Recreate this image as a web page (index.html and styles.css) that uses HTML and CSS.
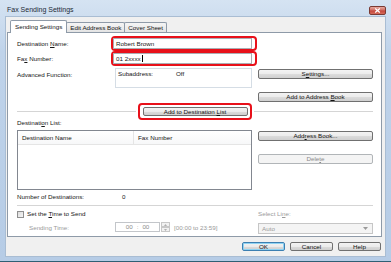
FILE: index.html
```html
<!doctype html>
<html lang="en">
	<head>
		<meta charset="UTF-8" />
		<meta name="viewport" content="width=device-width, initial-scale=1.0" />
		<title>Fax Sending Settings</title>
		<link rel="stylesheet" href="styles.css">
	</head>
	<body>
		<div class="window">
			<div class="titlebar">
				<span class="title">Fax Sending Settings</span>
				<span class="close-btn">
					<svg width="7" height="5" viewBox="0 0 7 5"><path d="M1.2 0.6 L5.8 4.4 M5.8 0.6 L1.2 4.4" stroke="#fff" stroke-width="1.3" fill="none"/></svg>
				</span>
			</div>

			<div class="client">
				<div class="tabs">
					<div class="tab active">Sending Settings</div>
					<div class="tab">Edit Address Book</div>
					<div class="tab">Cover Sheet</div>
				</div>

				<div class="panel">
					<!-- 宛先 -->
					<div class="field-row">
						<span class="label">Destination <u>N</u>ame:</span>
						<div class="highlight field-highlight">
							<div class="textbox">Robert Brown</div>
						</div>
					</div>
					<div class="field-row">
						<span class="label">Fa<u>x</u> Number:</span>
						<div class="highlight field-highlight">
							<div class="textbox">01 2xxxx<span class="caret"></span></div>
						</div>
					</div>

					<div class="split advanced-row">
						<div class="advanced">
							<span class="label wide">Advanced Function:</span>
							<div class="info-box">
								<span class="info-key">Subaddress:</span>
								<span>Off</span>
							</div>
						</div>
						<div>
							<div class="btn settings-btn">S<u>e</u>ttings...</div>
						</div>
					</div>

					<div class="btn side-btn address-add-btn">Add to Address <u>B</u>ook</div>

					<div class="separator-row">
						<div class="line"></div>
						<div class="highlight add-highlight">
							<div class="btn add-btn">Add to Destination <u>L</u>ist</div>
						</div>
						<div class="line"></div>
					</div>

					<div class="caption">Destinati<u>o</u>n List:</div>

					<div class="split list-row">
						<div class="listbox">
							<div class="list-header">
								<span class="col-name">Destination Name</span>
								<span class="col-fax">Fax Number</span>
							</div>
						</div>
						<div>
							<div class="btn book-btn">Add<u>r</u>ess Book...</div>
							<div class="btn disabled delete-btn">Dele<u>t</u>e</div>
						</div>
					</div>

					<div class="count-row">
						<span class="count-label">Number of Destinations:</span>
						<span>0</span>
					</div>

					<div class="hr"></div>

					<div class="split check-row">
						<div class="check-wrap">
							<span class="checkbox"></span>
							<span>Set the <u>T</u>ime to Send</span>
						</div>
						<div class="muted">Select Li<u>n</u>e:</div>
					</div>

					<div class="split time-row">
						<div class="time-wrap">
							<span class="label wide muted indent">Sending Time:</span>
							<div class="time-box"><span>00</span><span>:</span><span>00</span></div>
							<div class="spinner">
								<span class="spin-btn"><svg width="3" height="2" viewBox="0 0 3 2"><path d="M0 2 L3 2 L1.5 0 Z" fill="#b0b0b0"/></svg></span>
								<span class="spin-btn"><svg width="3" height="2" viewBox="0 0 3 2"><path d="M0 0 L3 0 L1.5 2 Z" fill="#b0b0b0"/></svg></span>
							</div>
							<span class="muted range">[00:00 to 23:59]</span>
						</div>
						<div class="select disabled-select">
							<span>Auto</span>
							<svg width="5" height="3" viewBox="0 0 5 3"><path d="M0 0 L5 0 L2.5 3 Z" fill="#9a9a9a"/></svg>
						</div>
					</div>
				</div>

				<div class="footer">
					<div class="btn default footer-btn">OK</div>
					<div class="btn footer-btn">Cancel</div>
					<div class="btn footer-btn">Help</div>
				</div>
			</div>
		</div>
	</body>
</html>
```

FILE: styles.css
```css
* {
	box-sizing: border-box;
}
body {
	margin: 0;
	font-family: "Liberation Sans", Arial, sans-serif;
	font-size: 6.25px;
	color: #151515;
	background: #fff;
}
u {
	text-decoration-thickness: 0.5px;
	text-underline-offset: 1px;
}
.window {
	width: 391px;
	height: 262px;
	display: flex;
	flex-direction: column;
	padding: 0 5px 4px 5px;
	background: linear-gradient(#d5e3f2, #bfd3ea 20%, #b6cce6);
	border-bottom: 1px solid #2f5f74;
}
.titlebar {
	height: 16px;
	display: flex;
	justify-content: space-between;
	padding-left: 2px;
}
.title {
	font-size: 7px;
	padding-top: 6px;
	color: #1d2a36;
}
.close-btn {
	align-self: flex-end;
	width: 17px;
	height: 9px;
	margin: 0 0 1px 0;
	display: flex;
	align-items: center;
	justify-content: center;
	border: 1px solid #7a3a33;
	border-radius: 2px;
	background: linear-gradient(#e8aaa0, #d06f64 45%, #c4473c 55%, #d66b5a);
}

/* クライアント領域 */
.client {
	flex: 1;
	background: #f0f0f0;
	border: 1px solid #a9bdd3;
	display: flex;
	flex-direction: column;
	padding-left: 1px;
}
.tabs {
	height: 15px;
	padding: 3px 0 0 3px;
	display: flex;
	align-items: flex-end;
}
.tab {
	height: 10px;
	padding: 0 3px;
	line-height: 9px;
	border: 1px solid #8e9aa8;
	border-bottom: none;
	border-radius: 2px 2px 0 0;
	background: linear-gradient(#f5f5f5, #e4e4e4);
	margin-right: -1px;
}
.tab.active {
	height: 13px;
	line-height: 11px;
	margin-bottom: -1px;
	background: #fff;
	position: relative;
	z-index: 1;
	padding: 0 4px;
}
.panel {
	width: 375px;
	height: 205px;
	background: #fff;
	border: 1px solid #8e9aa8;
	padding: 3px 8px 0 9px;
}

/* 共通 */
.split {
	display: grid;
	grid-template-columns: 235px 115px;
	column-gap: 6px;
}
.label {
	width: 94px;
	flex-shrink: 0;
}
.label.wide {
	width: 98px;
}
.highlight {
	border: 2px solid #e8101a;
	border-radius: 4px;
}
.btn {
	height: 10px;
	line-height: 8px;
	text-align: center;
	border: 1px solid #707070;
	border-radius: 2px;
	background: linear-gradient(#f3f3f3, #ebebeb 50%, #dcdcdc 51%, #cfcfcf);
	color: #111;
}
.btn.disabled {
	border-color: #b1b5b8;
	background: #f4f4f4;
	color: #8a8a8a;
}
.btn.default {
	border-color: #3c7fb1;
	box-shadow: inset 0 0 0 1px #8fd3f2;
}
.muted {
	color: #9a9a9a;
}

/* 宛先・FAX番号 */
.field-row {
	height: 15px;
	display: flex;
	align-items: center;
}
.field-highlight {
	width: 146px;
	height: 15px;
	display: flex;
	align-items: center;
}
.textbox {
	width: 139px;
	height: 11px;
	border: 1px solid #abadb3;
	background: #fff;
	line-height: 9px;
	padding-left: 2px;
	display: flex;
	align-items: center;
}
.caret {
	width: 1px;
	height: 7px;
	background: #000;
	margin-left: 1px;
}

/* 詳細機能 */
.advanced-row {
	margin-top: 2px;
}
.advanced {
	display: flex;
}
.advanced .label {
	padding-top: 3px;
}
.info-box {
	width: 137px;
	height: 20px;
	border: 1px solid #d5dde5;
	padding: 1px 0 0 2px;
	display: flex;
}
.info-key {
	width: 58px;
}
.settings-btn {
	margin-top: 1px;
}
.side-btn {
	width: 115px;
	margin: 4px 0 0 auto;
}
.separator-row {
	height: 17px;
	margin-top: 1px;
	display: flex;
	align-items: center;
}
.line {
	flex: 1;
	height: 2px;
	border-top: 1px solid #d5d5d5;
	border-bottom: 1px solid #fff;
}
.add-highlight {
	width: 114px;
	height: 17px;
	margin: 0 2px;
	display: flex;
	align-items: center;
	justify-content: center;
}
.add-btn {
	width: 105px;
	height: 9px;
	line-height: 7px;
}

/* 宛先リスト */
.caption {
	margin-top: -1px;
	line-height: 8px;
}
.list-row {
	margin-top: 3px;
}
.listbox {
	height: 60px;
	border: 1px solid #828790;
	background: #fff;
}
.list-header {
	height: 14px;
	display: flex;
	align-items: center;
	background: linear-gradient(#fff, #f7f8f9);
	border-bottom: 1px solid #e5e5e5;
}
.col-name {
	width: 116px;
	padding-left: 4px;
	border-right: 1px solid #e5e5e5;
	line-height: 13px;
}
.col-fax {
	padding-left: 4px;
}
.book-btn {
	margin-top: 1px;
}
.delete-btn {
	margin-top: 13px;
}
.count-row {
	margin-top: 3px;
	line-height: 8px;
	display: flex;
}
.count-label {
	width: 105px;
}
.hr {
	height: 2px;
	margin-top: 4px;
	border-top: 1px solid #d5d5d5;
	border-bottom: 1px solid #fff;
}

/* 送信時刻 */
.check-row {
	margin-top: 3px;
	line-height: 8px;
}
.check-wrap {
	display: flex;
	align-items: center;
}
.checkbox {
	width: 7px;
	height: 7px;
	margin-right: 3px;
	border: 1px solid #8f8f8f;
	background: linear-gradient(135deg, #dcdcdc, #f6f6f6);
}
.time-row {
	margin-top: 4px;
}
.time-wrap {
	display: flex;
	align-items: center;
	height: 10px;
}
.indent {
	padding-left: 12px;
}
.time-box {
	width: 45px;
	height: 10px;
	border: 1px solid #c3c6ca;
	display: flex;
	justify-content: center;
	gap: 4px;
	line-height: 8px;
	color: #8a8a8a;
}
.spinner {
	width: 9px;
	height: 10px;
	margin-left: 1px;
	display: flex;
	flex-direction: column;
}
.spin-btn {
	flex: 1;
	display: flex;
	align-items: center;
	justify-content: center;
	border: 1px solid #c8c8c8;
	background: #f2f2f2;
}
.range {
	margin-left: 4px;
}
.select {
	height: 11px;
	margin-top: 1px;
	display: flex;
	align-items: center;
	justify-content: space-between;
	padding: 0 4px 0 3px;
}
.disabled-select {
	border: 1px solid #c6c6c6;
	background: #f4f4f4;
	color: #9a9a9a;
}

/* フッター */
.footer {
	display: flex;
	justify-content: flex-end;
	gap: 5px;
	padding: 5px 4px 0 0;
}
.footer-btn {
	width: 43px;
	height: 9px;
	line-height: 7px;
}
```
